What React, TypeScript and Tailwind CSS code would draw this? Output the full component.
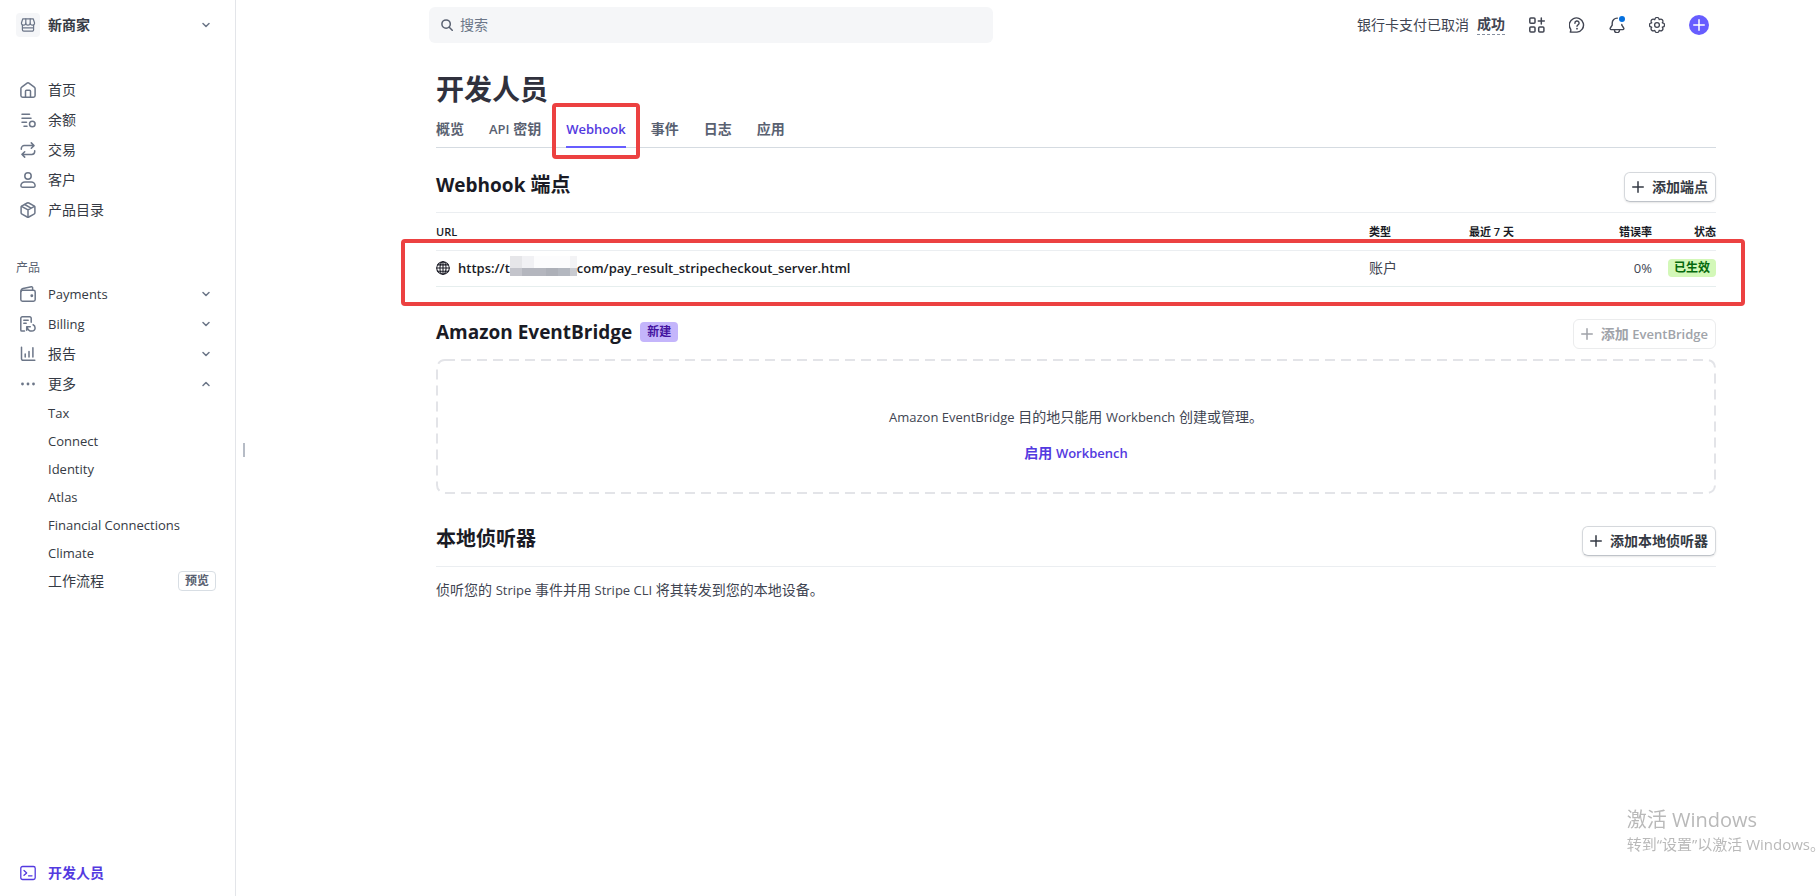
import type { ComponentType, PropsWithChildren } from 'react';
import { clsx } from 'clsx';

function Icon({ children, className = 'h-4 w-4' }: PropsWithChildren<{ className?: string }>) {
  return (
    <svg
      viewBox="0 0 16 16"
      fill="none"
      stroke="currentColor"
      strokeWidth="1.5"
      strokeLinecap="round"
      strokeLinejoin="round"
      aria-hidden="true"
      className={clsx('shrink-0', className)}
    >
      {children}
    </svg>
  );
}

const StoreIcon = () => (
  <Icon>
    <path
      d="M2.8 1.8h10.4l1.3 3.9a2 2 0 0 1-2.1 2.5A2.2 2.2 0 0 1 10.2 6a2.2 2.2 0 0 1-4.4 0 2.2 2.2 0 0 1-2.2 2.2 2 2 0 0 1-2.1-2.5z"
      strokeWidth="1.2"
    />
    <path
      d="M5.8 6V1.8M10.2 6V1.8M2.4 8.2v4.6a1.4 1.4 0 0 0 1.4 1.4h8.4a1.4 1.4 0 0 0 1.4-1.4V8.2M2.4 10.8h11.2"
      strokeWidth="1.2"
    />
  </Icon>
);

const HomeIcon = () => (
  <Icon>
    <path d="M.9 6.6c0-.6.3-1.2.8-1.5l5.4-4a1.5 1.5 0 0 1 1.8 0l5.4 4c.5.4.8.9.8 1.5v6.9a1.7 1.7 0 0 1-1.7 1.7H2.6a1.7 1.7 0 0 1-1.7-1.7z" />
    <path d="M5.5 15V9.2a1 1 0 0 1 1-1h3a1 1 0 0 1 1 1V15" />
  </Icon>
);

const BalanceIcon = () => (
  <Icon>
    <path d="M2 2.2h7.5M2 6.2h9M2 10.2h4.5M4 14.2h3" />
    <circle cx="12.3" cy="12" r="2.8" />
  </Icon>
);

const SwapIcon = () => (
  <Icon>
    <path d="M11.3.9 14 3.6l-2.7 2.7M14 3.6H4.2a2.9 2.9 0 0 0-2.9 2.9v.7" />
    <path d="M4.7 15.1 2 12.4l2.7-2.7M2 12.4h9.8a2.9 2.9 0 0 0 2.9-2.9v-.7" />
  </Icon>
);

const PersonIcon = () => (
  <Icon>
    <circle cx="8" cy="4" r="3.2" />
    <path d="M4.8 9.9h6.4a3.9 3.9 0 0 1 3.9 3.9 1.4 1.4 0 0 1-1.4 1.4H2.3a1.4 1.4 0 0 1-1.4-1.4 3.9 3.9 0 0 1 3.9-3.9z" />
  </Icon>
);

const BoxIcon = () => (
  <Icon>
    <path d="M7.2 1a1.7 1.7 0 0 1 1.6 0L14 3.8c.6.3.9.9.9 1.5v5.4c0 .6-.3 1.2-.9 1.5L8.8 15a1.7 1.7 0 0 1-1.6 0L2 12.2a1.7 1.7 0 0 1-.9-1.5V5.3c0-.6.3-1.2.9-1.5z" />
    <path d="M1.5 4.4 8 7.9l6.5-3.5M8 7.9V15M4.7 2.5l6.4 3.6" />
  </Icon>
);

const WalletIcon = () => (
  <Icon>
    <rect x=".8" y="4.2" width="14.4" height="11" rx="1.7" />
    <path d="M1 5.4c0-1.6.6-2.5 2-2.8L11.4.8a1 1 0 0 1 1.2 1V4" />
    <circle cx="11.8" cy="9.7" r=".7" fill="currentColor" />
  </Icon>
);

const BillingIcon = () => (
  <Icon>
    <path d="M4.5 15.1H1.9A1.1 1.1 0 0 1 .8 14V2.3A1.5 1.5 0 0 1 2.3.8h7.4a1.5 1.5 0 0 1 1.5 1.5v3.9" />
    <path d="M3.8 4.2h4.4M3.8 7.2h2.4" />
    <path d="M10.3 10.7H6.7v3.6M6.9 10.9c1 3 3 4.3 5 4.2a3.2 3.2 0 0 0 3.2-3.2c0-1.5-.8-2.6-2-3.1" />
  </Icon>
);

const ReportIcon = () => (
  <Icon>
    <path d="M1.5 1.2v11.6A1.5 1.5 0 0 0 3 14.3h11.8M5.2 8v3M9 5.5V11M12.9 1.8V11" />
  </Icon>
);

const MoreIcon = () => (
  <Icon>
    <g fill="currentColor" stroke="none">
      <circle cx="2.5" cy="8" r="1.4" />
      <circle cx="8" cy="8" r="1.4" />
      <circle cx="13.5" cy="8" r="1.4" />
    </g>
  </Icon>
);

const TerminalIcon = () => (
  <Icon>
    <rect x=".8" y="1.5" width="14.4" height="13" rx="1.8" strokeWidth="1.3" />
    <path d="m4 5.5 2.7 2.4L4 10.3M8.5 10.8H12" strokeWidth="1.3" />
  </Icon>
);

const AppsIcon = () => (
  <Icon>
    <rect x=".8" y="1" width="5.2" height="5.2" rx="1" />
    <rect x=".8" y="9.9" width="5.2" height="5.2" rx="1" />
    <rect x="9.7" y="9.9" width="5.2" height="5.2" rx="1" />
    <path d="M12.3.9v6M9.3 3.9h6" />
  </Icon>
);

const HelpIcon = () => (
  <Icon>
    <path d="M1.2 15.1c.7-.9.8-1.900.4-3A7.1 7.1 0 1 1 8 15.1z" strokeWidth="1.4" />
    <path d="M5.9 6.2A2.1 2.1 0 1 1 9 7.9c-.7.4-1 .7-1 1.400" strokeWidth="1.4" />
    <circle cx="8" cy="11.7" r=".9" fill="currentColor" stroke="none" />
  </Icon>
);

const BellIcon = () => (
  <Icon>
    <path
      d="M8.3 1.1A4.9 4.9 0 0 0 3.2 6v2.2L1.3 11a1 1 0 0 0 .8 1.6h11.8a1 1 0 0 0 .8-1.6l-1.9-2.8V7.4"
      strokeWidth="1.4"
    />
    <path d="M5.5 13.200a2.5 2.5 0 0 0 5 0" strokeWidth="1.4" />
  </Icon>
);

const GearIcon = () => (
  <Icon>
    <path
      d="M13.3 5.8l.8.2a2.1 2.1 0 0 1 0 4l-.8.2.4.7a2.1 2.1 0 0 1-2.8 2.8l-.7-.4-.2.8a2.100 2.100 0 0 1-4 0l-.2-.8-.7.4a2.1 2.1 0 0 1-2.800-2.800l.4-.7-.8-.2a2.1 2.1 0 0 1 0-4l.8-.2-.4-.7a2.1 2.1 0 0 1 2.800-2.800l.7.4.2-.8a2.1 2.1 0 0 1 4 0l.2.8.7-.4a2.1 2.1 0 0 1 2.800 2.800z"
      strokeWidth="1.3"
    />
    <circle cx="8" cy="8" r="2.4" strokeWidth="1.3" />
  </Icon>
);

const PlusIcon = () => (
  <Icon className="h-3 w-3">
    <path d="M8 1v14M1 8h14" strokeWidth="2" />
  </Icon>
);

const SearchIcon = () => (
  <Icon className="h-3 w-3">
    <circle cx="6.8" cy="6.8" r="5.6" strokeWidth="2" />
    <path d="m11 11 4 4" strokeWidth="2" />
  </Icon>
);

const GlobeIcon = () => (
  <Icon className="h-3.5 w-3.5">
    <circle cx="8" cy="8" r="7.2" strokeWidth="1.2" />
    <ellipse cx="8" cy="8" rx="3.5" ry="7.2" strokeWidth="1.2" />
    <path d="M8 .8v14.4M.8 8h14.4M2 4.4h12M2 11.6h12" strokeWidth="1.2" />
  </Icon>
);

const Chevron = ({ up = false }: { up?: boolean }) => (
  <Icon className="h-2 w-2">
    <path d={up ? 'm2 11 6-6 6 6' : 'm2 5 6 6 6-6'} strokeWidth="3" />
  </Icon>
);

// Latin runs are set one size down so that they sit evenly beside the Chinese text
function En({ children, heading = false }: PropsWithChildren<{ heading?: boolean }>) {
  return <span className={heading ? 'text-[19px]' : 'text-[13px]'}>{children}</span>;
}

type NavItem = { label: string; icon: ComponentType; latin?: boolean; open?: boolean };

const mainNavigation: NavItem[] = [
  { label: '首页', icon: HomeIcon },
  { label: '余额', icon: BalanceIcon },
  { label: '交易', icon: SwapIcon },
  { label: '客户', icon: PersonIcon },
  { label: '产品目录', icon: BoxIcon }
];

const productNavigation: NavItem[] = [
  { label: 'Payments', icon: WalletIcon, latin: true },
  { label: 'Billing', icon: BillingIcon, latin: true },
  { label: '报告', icon: ReportIcon },
  { label: '更多', icon: MoreIcon, open: true }
];

const moreNavigation = ['Tax', 'Connect', 'Identity', 'Atlas', 'Financial Connections', 'Climate'];

function Sidebar() {
  return (
    <aside className="flex w-[236px] shrink-0 flex-col border-r border-[#e3e5e9] pb-2 text-[#353a44]">
      <button type="button" className="flex h-[50px] items-center gap-2 pr-[25px] pl-4 text-left font-semibold">
        <span className="flex h-6 w-6 items-center justify-center rounded bg-[#f5f6f8] text-[#6c7688]">
          <StoreIcon />
        </span>
        <span className="flex-1">新商家</span>
        <span className="text-[#6c7688]">
          <Chevron />
        </span>
      </button>

      <nav className="mt-[25px]">
        {mainNavigation.map(({ label, icon: NavIcon }) => (
          <a key={label} href="#" className="flex h-[30px] items-center gap-3 px-5">
            <span className="text-[#6c7688]">
              <NavIcon />
            </span>
            {label}
          </a>
        ))}
      </nav>

      <p className="mt-[33px] px-4 text-xs leading-5 text-[#596171]">产品</p>
      <nav className="mt-px">
        {productNavigation.map(({ label, icon: NavIcon, latin, open }) => (
          <button
            key={label}
            type="button"
            aria-expanded={Boolean(open)}
            className="flex h-[30px] w-full items-center gap-3 pr-[25px] pl-5 text-left"
          >
            <span className="text-[#6c7688]">
              <NavIcon />
            </span>
            <span className="flex-1">{latin ? <En>{label}</En> : label}</span>
            <span className="text-[#6c7688]">
              <Chevron up={open} />
            </span>
          </button>
        ))}
        {moreNavigation.map((label) => (
          <a key={label} href="#" className="flex h-7 items-center pl-12">
            <En>{label}</En>
          </a>
        ))}
        <a href="#" className="flex h-7 items-center justify-between pr-[19px] pl-12">
          工作流程
          <span className="flex h-5 items-center rounded border border-[#d8dee4] px-1.5 text-xs font-semibold text-[#596171]">
            预览
          </span>
        </a>
      </nav>

      <a href="#" className="mt-auto flex h-[30px] items-center gap-3 px-5 font-semibold text-[#533ae0]">
        <TerminalIcon />
        开发人员
      </a>
    </aside>
  );
}

function Header() {
  return (
    <header className="flex h-[50px] items-center justify-between pr-[108px] pl-[177px]">
      <label className="flex h-9 w-[564px] items-center gap-[7px] rounded-md bg-[#f5f6f8] px-3 text-[#596171]">
        <SearchIcon />
        <input
          type="search"
          aria-label="搜索"
          placeholder="搜索"
          className="w-full bg-transparent outline-none placeholder:text-[#6c7688]"
        />
      </label>
      <div className="flex items-center gap-6 text-[#414552]">
        <p className="flex gap-2">
          银行卡支付已取消
          <a href="#" className="border-b border-dashed border-[#87909f] leading-[17px] font-semibold">
            成功
          </a>
        </p>
        <button type="button" aria-label="应用">
          <AppsIcon />
        </button>
        <button type="button" aria-label="帮助">
          <HelpIcon />
        </button>
        <button type="button" aria-label="通知" className="relative">
          <BellIcon />
          <span className="absolute -top-px right-0 h-1.5 w-1.5 rounded-full bg-[#0570de]" />
        </button>
        <button type="button" aria-label="设置">
          <GearIcon />
        </button>
        <button
          type="button"
          aria-label="新建"
          className="flex h-5 w-5 items-center justify-center rounded-full bg-[#675dff] text-white"
        >
          <PlusIcon />
        </button>
      </div>
    </header>
  );
}

const tabClass = 'flex h-full items-center pb-px font-semibold';

function Tabs() {
  return (
    <nav className="mt-[5px] flex h-9 gap-[25px] border-b border-[#d5dbe1] text-[#596171]">
      <a href="#" className={tabClass}>
        概览
      </a>
      <a href="#" className={tabClass}>
        <span>
          <En>API</En> 密钥
        </span>
      </a>
      <a href="#" aria-current="page" className={clsx(tabClass, 'relative text-[#533ae0]')}>
        <En>Webhook</En>
        <span className="absolute inset-x-0 -bottom-px h-0.5 bg-[#675dff]" />
        <span className="absolute -top-[9px] -right-3.5 -bottom-3 -left-3.5 rounded border-4 border-[#ec4141]" />
      </a>
      {['事件', '日志', '应用'].map((label) => (
        <a key={label} href="#" className={tabClass}>
          {label}
        </a>
      ))}
    </nav>
  );
}

function AddButton({ children, disabled = false }: PropsWithChildren<{ disabled?: boolean }>) {
  return (
    <button
      type="button"
      disabled={disabled}
      className={clsx(
        'flex h-[30px] items-center gap-2 rounded-md border px-[7px] font-semibold',
        disabled
          ? 'border-[#ebeced] text-[#a0a3a9]'
          : 'border-[#d5d8dc] border-b-[#bfc3c9] text-[#353a44] shadow-[0_1px_2px_rgba(0,0,0,0.1)]'
      )}
    >
      <PlusIcon />
      <span>{children}</span>
    </button>
  );
}

// Pixelated patch that hides the domain name
function Mosaic() {
  return (
    <svg viewBox="0 0 67 24" className="h-6 w-[67px] shrink-0" shapeRendering="crispEdges" aria-hidden="true">
      <path fill="#e6e6e9" d="M0 0h12v12H0z" />
      <path fill="#f1f1f4" d="M12 0h12v12H12z" />
      <path fill="#fcfcfd" d="M24 0h36v12H24z" />
      <path fill="#f3f3f5" d="M60 0h7v12h-7z" />
      <path fill="#c3c4cb" d="M0 12h12v8H0z" />
      <path fill="#b4b6be" d="M12 12h24v8H12z" />
      <path fill="#adb0b8" d="M36 12h12v8H36z" />
      <path fill="#b3b7bf" d="M48 12h12v8H48z" />
      <path fill="#c9cbd1" d="M60 12h7v8h-7z" />
    </svg>
  );
}

function EndpointTable() {
  return (
    <div className="relative">
      <table className="w-full table-fixed text-left">
        <colgroup>
          <col />
          <col className="w-[100px]" />
          <col className="w-[100px]" />
          <col className="w-[83px]" />
          <col className="w-16" />
        </colgroup>
        <thead>
          <tr className="h-[37px] border-b border-[#ebeef1] text-[11px] text-[#1a1b25]">
            <th className="pt-0.5 font-semibold">URL</th>
            <th className="pt-0.5 font-semibold">类型</th>
            <th className="pt-0.5 font-semibold">最近 7 天</th>
            <th className="pt-0.5 text-right font-semibold">错误率</th>
            <th className="pt-0.5 text-right font-semibold">状态</th>
          </tr>
        </thead>
        <tbody>
          <tr className="h-9 border-b border-[#e6eeee] text-[#414552]">
            <td>
              <div className="flex items-center text-[13px] font-semibold text-[#1a1b25]">
                <GlobeIcon />
                <a href="#" className="ml-2 flex items-center">
                  https://t
                  <Mosaic />
                  com/pay_result_stripecheckout_server.html
                </a>
              </div>
            </td>
            <td>账户</td>
            <td />
            <td className="text-right">
              <En>0%</En>
            </td>
            <td>
              <span className="ml-auto flex h-[18px] w-12 items-center justify-center rounded bg-[#d3f8b8] text-xs font-semibold text-[#05690d]">
                已生效
              </span>
            </td>
          </tr>
        </tbody>
      </table>
      <div className="pointer-events-none absolute top-[26px] -right-[29px] -bottom-[19px] -left-[35px] rounded border-4 border-[#ec4141]" />
    </div>
  );
}

const headingClass = 'text-xl leading-[26px] font-bold text-[#1a1b25]';

export default function App() {
  return (
    <div className="flex min-h-screen bg-white font-['Open_Sans','Noto_Sans_CJK_SC',sans-serif] text-sm">
      <Sidebar />
      <div className="flex w-4 shrink-0 items-center justify-center pt-1">
        <span className="h-3.5 w-0.5 bg-[#b6bcc6]" />
      </div>

      <div className="min-w-0 flex-1">
        <Header />
        <main className="pr-[101px] pl-[184px]">
          <h1 className="mt-[21px] text-[28px] leading-9 font-bold text-[#30313d]">开发人员</h1>
          <Tabs />

          <section className="mt-6">
            <div className="flex items-start justify-between border-b border-[#ebeef1] pb-[10px]">
              <h2 className={headingClass}>
                <En heading>Webhook</En> 端点
              </h2>
              <AddButton>添加端点</AddButton>
            </div>
            <EndpointTable />
          </section>

          <section className="mt-8">
            <div className="flex items-start justify-between">
              <h2 className={clsx(headingClass, 'flex items-center gap-2')}>
                <En heading>Amazon EventBridge</En>
                <span className="flex h-5 items-center rounded bg-[#c4b5fb] px-[7px] text-xs font-semibold text-[#4413a0]">
                  新建
                </span>
              </h2>
              <AddButton disabled>
                添加 <En>EventBridge</En>
              </AddButton>
            </div>
            <div className="relative mt-[10px] flex flex-col items-center gap-4 pt-12 pb-[31px] leading-5">
              <svg className="pointer-events-none absolute inset-0 h-full w-full overflow-visible" aria-hidden="true">
                <rect
                  x="1"
                  y="1"
                  rx="8"
                  className="h-[calc(100%-2px)] w-[calc(100%-2px)]"
                  fill="none"
                  stroke="#e3e4e8"
                  strokeWidth="2"
                  strokeDasharray="10 6"
                />
              </svg>
              <p className="text-[#414552]">
                <En>Amazon EventBridge</En> 目的地只能用 <En>Workbench</En> 创建或管理。
              </p>
              <a href="#" className="font-semibold text-[#533ae0]">
                启用 <En>Workbench</En>
              </a>
            </div>
          </section>

          <section className="mt-8">
            <div className="flex items-start justify-between border-b border-[#ebeef1] pb-[10px]">
              <h2 className={headingClass}>本地侦听器</h2>
              <AddButton>添加本地侦听器</AddButton>
            </div>
            <p className="mt-[13px] leading-5 text-[#414552]">
              侦听您的 <En>Stripe</En> 事件并用 <En>Stripe CLI</En> 将其转发到您的本地设备。
            </p>
          </section>
        </main>
      </div>

      <div className="pointer-events-none fixed -right-2 bottom-[42px] whitespace-nowrap text-[#b9b9b9]">
        <p className="text-xl leading-7">激活 Windows</p>
        <p className="text-[15px] leading-5">转到“设置”以激活 Windows。</p>
      </div>
    </div>
  );
}
